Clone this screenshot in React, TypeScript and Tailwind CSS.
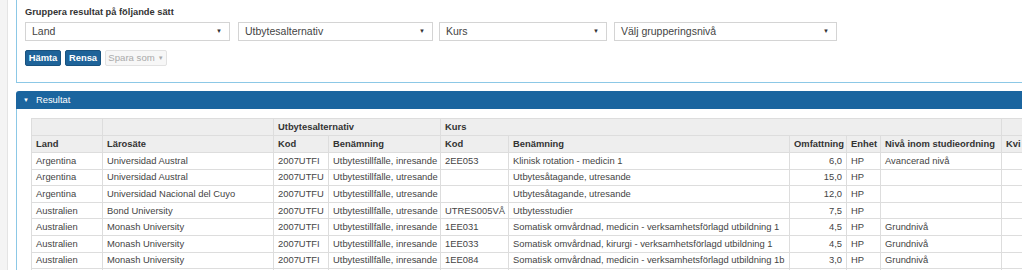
import React from 'react';

const rows = [
    ['Argentina', 'Universidad Austral', '2007UTFI', 'Utbytestillfälle, inresande', '2EE053', 'Klinisk rotation - medicin 1', '6,0', 'HP', 'Avancerad nivå'],
    ['Argentina', 'Universidad Austral', '2007UTFU', 'Utbytestillfälle, utresande', '', 'Utbytesåtagande, utresande', '15,0', 'HP', ''],
    ['Argentina', 'Universidad Nacional del Cuyo', '2007UTFU', 'Utbytestillfälle, utresande', '', 'Utbytesåtagande, utresande', '12,0', 'HP', ''],
    ['Australien', 'Bond University', '2007UTFU', 'Utbytestillfälle, utresande', 'UTRES005VÅ', 'Utbytesstudier', '7,5', 'HP', ''],
    ['Australien', 'Monash University', '2007UTFI', 'Utbytestillfälle, inresande', '1EE031', 'Somatisk omvårdnad, medicin - verksamhetsförlagd utbildning 1', '4,5', 'HP', 'Grundnivå'],
    ['Australien', 'Monash University', '2007UTFI', 'Utbytestillfälle, inresande', '1EE033', 'Somatisk omvårdnad, kirurgi - verksamhetsförlagd utbildning 1', '4,5', 'HP', 'Grundnivå'],
    ['Australien', 'Monash University', '2007UTFI', 'Utbytestillfälle, inresande', '1EE084', 'Somatisk omvårdnad, medicin - verksamhetsförlagd utbildning 1b', '3,0', 'HP', 'Grundnivå'],
    ['', '', '', '', '', '', '', '', ''],
];

const colWidths = [71, 171, 55, 112, 68, 281, 57, 34, 121, 80];

function Select({ label, width }: { label: string; width: string }) {
    return (
        <div className={`${width} h-[19px] border border-[#d4d4d4] bg-white flex items-center justify-between pl-[6px] pr-[7px] text-[10.5px] text-[#444]`}>
            <span>{label}</span>
            <span className="text-[6px] text-[#333]">▼</span>
        </div>
    );
}

export default function App() {
    const td = 'border border-[#dddddd] px-[4px] whitespace-nowrap overflow-hidden';
    return (
        <div className="w-[1022px] h-[270px] overflow-hidden bg-white flex" style={{ fontFamily: '"Liberation Sans", Arial, sans-serif' }}>
            <div className="w-[8px] shrink-0 bg-[#f4f4f4] border-r border-[#e4e4e4]" />
            <div className="pl-[8px] w-[1100px] shrink-0">
                {/* grupperingsval */}
                <div className="h-[83px] border-l border-b border-[#8cc8e6] pl-[8px] pt-[7px]">
                    <div className="text-[9.3px] leading-[11px] font-bold text-[#333] mb-[4px]">Gruppera resultat på följande sätt</div>
                    <div className="flex">
                        <Select label="Land" width="w-[205px]" />
                        <div className="w-[8px]" />
                        <Select label="Utbytesalternativ" width="w-[195px]" />
                        <div className="w-[6px]" />
                        <Select label="Kurs" width="w-[168px]" />
                        <div className="w-[7px]" />
                        <Select label="Välj grupperingsnivå" width="w-[223px]" />
                    </div>
                    <div className="flex gap-[4px] mt-[9px]">
                        <button className="w-[36px] h-[16px] bg-[#1e6399] border border-[#18527f] rounded-[2px] text-white text-[9.4px] font-bold flex items-center justify-center">Hämta</button>
                        <button className="w-[36px] h-[16px] bg-[#1e6399] border border-[#18527f] rounded-[2px] text-white text-[9.4px] font-bold flex items-center justify-center">Rensa</button>
                        <button className="w-[62px] h-[16px] bg-[#f7f7f7] border border-[#e2e2e2] rounded-[2px] text-[#aaa] text-[9.6px] flex items-center justify-center gap-[3px]">
                            Spara som <span className="text-[6px]">▼</span>
                        </button>
                    </div>
                </div>

                {/* resultat */}
                <div className="mt-[8px]">
                    <div className="h-[18px] bg-[#1b659f] rounded-tl-[3px] flex items-center pl-[7px] text-white text-[9.4px]">
                        <span className="text-[6px] mr-[7px]">▼</span>
                        <span>Resultat</span>
                    </div>
                    <div className="border-l border-[#8cc8e6] pl-[14px] pt-[9px] h-[200px]">
                        <table className="table-fixed border-collapse text-[9.4px] text-[#444]" style={{ width: colWidths.reduce((a, b) => a + b, 0) }}>
                            <colgroup>
                                {colWidths.map((w, i) => <col key={i} style={{ width: w }} />)}
                            </colgroup>
                            <thead>
                                <tr className="h-[17px] bg-[#eeeeee] font-bold text-[#333]">
                                    <th className={td} />
                                    <th className={td} />
                                    <th className={`${td} text-left`} colSpan={2}>Utbytesalternativ</th>
                                    <th className={`${td} text-left`} colSpan={5}>Kurs</th>
                                    <th className={td} />
                                </tr>
                                <tr className="h-[17px] bg-[#eeeeee] font-bold text-[#333]">
                                    <th className={`${td} text-left`}>Land</th>
                                    <th className={`${td} text-left`}>Lärosäte</th>
                                    <th className={`${td} text-left`}>Kod</th>
                                    <th className={`${td} text-left`}>Benämning</th>
                                    <th className={`${td} text-left`}>Kod</th>
                                    <th className={`${td} text-left`}>Benämning</th>
                                    <th className={`${td} text-left`}>Omfattning</th>
                                    <th className={`${td} text-left`}>Enhet</th>
                                    <th className={`${td} text-left`}>Nivå inom studieordning</th>
                                    <th className={`${td} text-left`}>Kvi</th>
                                </tr>
                            </thead>
                            <tbody>
                                {rows.map((r, i) => (
                                    <tr key={i} className="h-[16.6px]">
                                        {r.map((c, j) => (
                                            <td key={j} className={`${td} ${j === 6 ? 'text-right' : ''}`}>{c}</td>
                                        ))}
                                        <td className={td} />
                                    </tr>
                                ))}
                            </tbody>
                        </table>
                    </div>
                </div>
            </div>
        </div>
    );
}
